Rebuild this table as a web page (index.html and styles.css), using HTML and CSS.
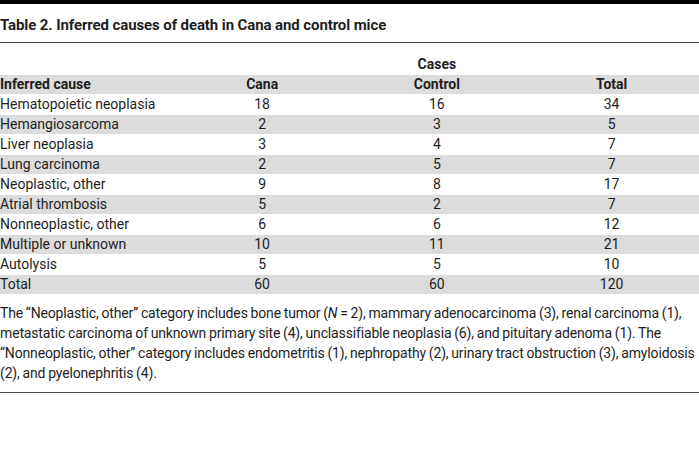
FILE: index.html
```
<!DOCTYPE html>
<html>
<head>
<meta charset="utf-8">
<link rel="stylesheet" href="styles.css">
</head>
<body>
<div class="topbar"></div>
<h1 class="title">Table 2. Inferred causes of death in Cana and control mice</h1>
<table class="data">
  <thead>
    <tr class="group"><th></th><th colspan="3">Cases</th></tr>
    <tr class="head"><th class="first">Inferred cause</th><th>Cana</th><th>Control</th><th>Total</th></tr>
  </thead>
  <tbody>
    <tr><td class="first">Hematopoietic neoplasia</td><td>18</td><td>16</td><td>34</td></tr>
    <tr class="alt"><td class="first">Hemangiosarcoma</td><td>2</td><td>3</td><td>5</td></tr>
    <tr><td class="first">Liver neoplasia</td><td>3</td><td>4</td><td>7</td></tr>
    <tr class="alt"><td class="first">Lung carcinoma</td><td>2</td><td>5</td><td>7</td></tr>
    <tr><td class="first">Neoplastic, other</td><td>9</td><td>8</td><td>17</td></tr>
    <tr class="alt"><td class="first">Atrial thrombosis</td><td>5</td><td>2</td><td>7</td></tr>
    <tr><td class="first">Nonneoplastic, other</td><td>6</td><td>6</td><td>12</td></tr>
    <tr class="alt"><td class="first">Multiple or unknown</td><td>10</td><td>11</td><td>21</td></tr>
    <tr><td class="first">Autolysis</td><td>5</td><td>5</td><td>10</td></tr>
    <tr class="alt"><td class="first">Total</td><td>60</td><td>60</td><td>120</td></tr>
  </tbody>
</table>
<p class="note">The “Neoplastic, other” category includes bone tumor (<i>N</i> = 2), mammary adenocarcinoma (3), renal carcinoma (1),<br>metastatic carcinoma of unknown primary site (4), unclassifiable neoplasia (6), and pituitary adenoma (1). The<br>“Nonneoplastic, other” category includes endometritis (1), nephropathy (2), urinary tract obstruction (3), amyloidosis<br>(2), and pyelonephritis (4).</p>
</body>
</html>
```

FILE: styles.css
```
html, body {
  margin: 0;
  padding: 0;
  background: #ffffff;
}
body {
  font-family: Roboto, "Liberation Sans", sans-serif;
  color: #1e1e1e;
  font-size: 14px;
  width: 699px;
}
.topbar {
  height: 4px;
  background: #000000;
}
.title {
  margin: 0;
  padding: 11px 0 7px 0;
  font-size: 15px;
  line-height: 20px;
  font-weight: 700;
  letter-spacing: -0.1px;
  border-bottom: 1px solid #4a4a4a;
}
.data {
  width: 100%;
  margin-top: 12px;
  border-collapse: separate;
  border-spacing: 0;
  table-layout: fixed;
}
.data th, .data td {
  padding: 0;
  line-height: 19px;
  text-align: center;
  border-bottom: 1px solid #ffffff;
}
.data th {
  font-weight: 700;
}
.data .first {
  text-align: left;
}
.data .head th, .data .alt td {
  background: #dcdcdc;
}
.note {
  margin: 0;
  padding: 8px 0 9px 0;
  line-height: 20px;
  letter-spacing: -0.15px;
  word-spacing: -0.5px;
  white-space: nowrap;
  border-bottom: 1px solid #4a4a4a;
}
```
